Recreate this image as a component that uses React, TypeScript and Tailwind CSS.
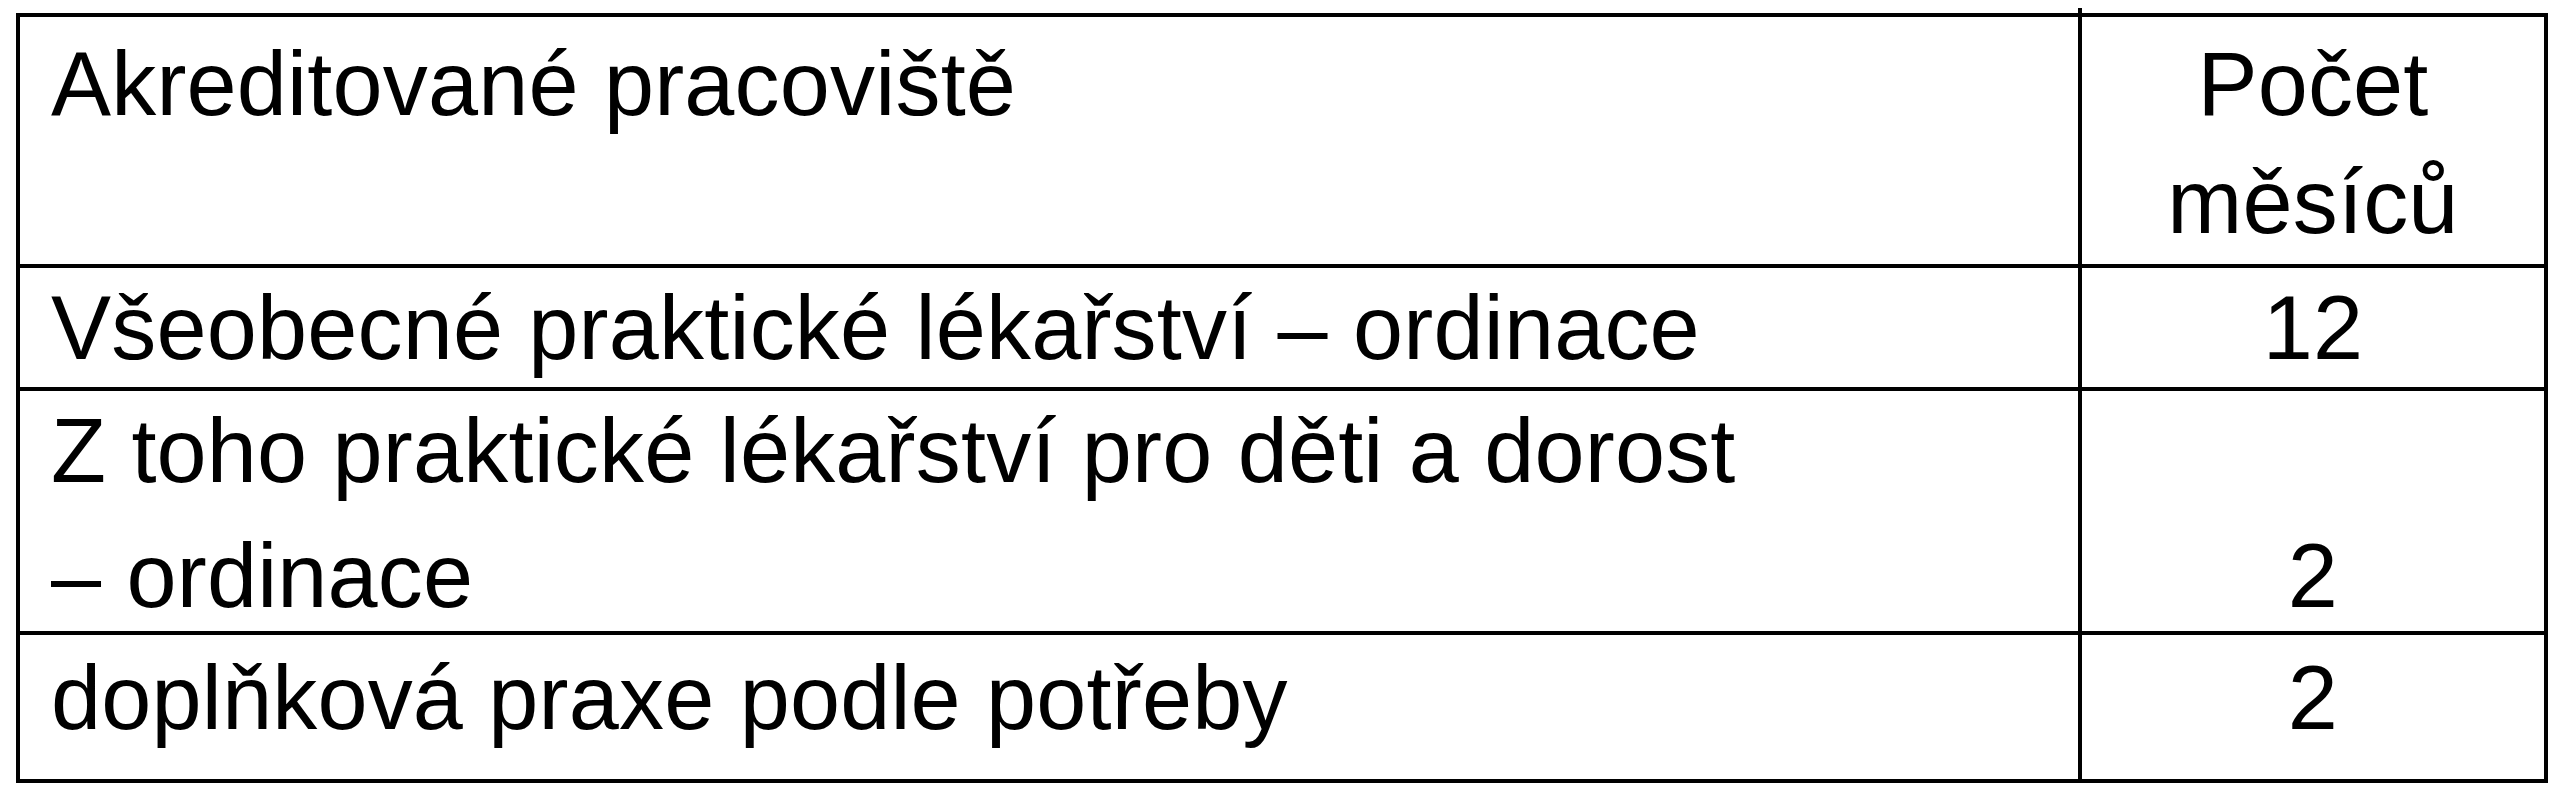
import React from "react";

export default function App() {
  return (
    <div className="min-h-[800px] w-[2565px] bg-white pt-[13px] pl-[16px] text-black">
      <div className="relative w-[2532px] border-4 border-black font-['Liberation_Sans',Arial,sans-serif] text-[90px] leading-[118px] tracking-[0.2px]">
        <div className="absolute -top-[9px] left-[2058px] h-[5px] w-[4px] bg-black" />

        {/* header */}
        <div className="flex h-[251px] border-b-4 border-black">
          <div className="w-[2062px] border-r-4 border-black pl-[31px] pt-[8px]">
            Akreditované pracoviště
          </div>
          <div className="flex-1 pt-[8px] text-center">
            <div>Počet</div>
            <div>měsíců</div>
          </div>
        </div>

        {/* row 1 */}
        <div className="flex h-[123px] border-b-4 border-black">
          <div className="w-[2062px] border-r-4 border-black pl-[31px] pt-[1px] whitespace-nowrap">
            Všeobecné praktické lékařství – ordinace
          </div>
          <div className="flex-1 pt-[1px] text-center">12</div>
        </div>

        {/* row 2 */}
        <div className="flex h-[244px] border-b-4 border-black">
          <div className="w-[2062px] border-r-4 border-black pl-[31px] pt-[1px] whitespace-nowrap">
            <div>Z toho praktické lékařství pro děti a dorost</div>
            <div className="mt-[7px]">– ordinace</div>
          </div>
          <div className="flex-1 pt-[126px] text-center">2</div>
        </div>

        {/* row 3 */}
        <div className="flex h-[144px]">
          <div className="w-[2062px] border-r-4 border-black pl-[31px] pt-[4px] whitespace-nowrap">
            doplňková praxe podle potřeby
          </div>
          <div className="flex-1 pt-[4px] text-center">2</div>
        </div>
      </div>
    </div>
  );
}
